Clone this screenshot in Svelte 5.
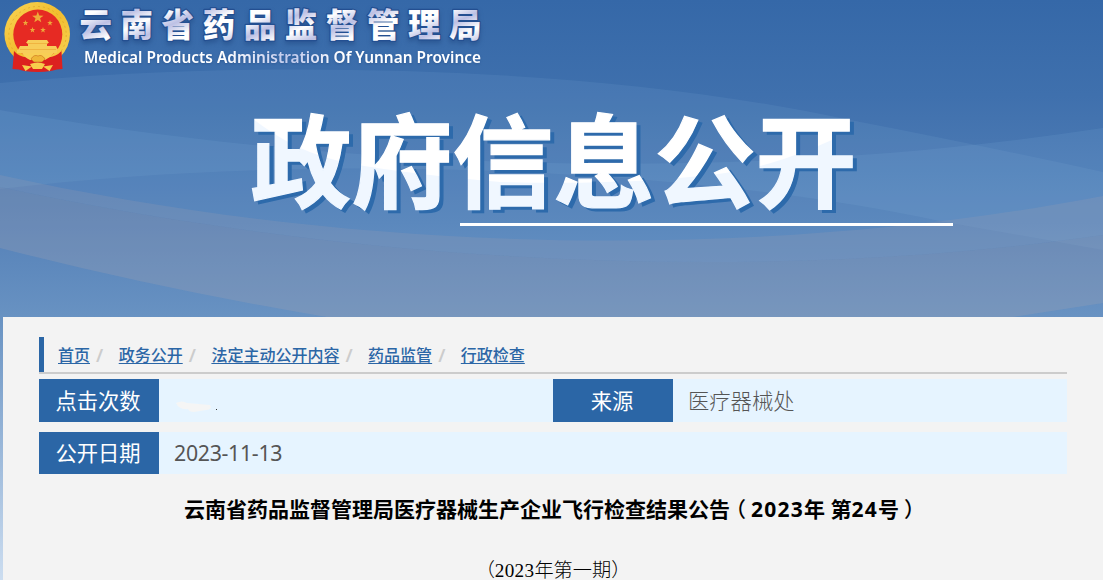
<script>
  const crumbs = ['首页', '政务公开', '法定主动公开内容', '药品监管', '行政检查'];
  const star = '0,-1 .235,-.324 .951,-.309 .38,.124 .588,.809 0,.4 -.588,.809 -.38,.124 -.951,-.309 -.235,-.324';
  const stars = [
    [37.8, 17.5, 6],
    [25.5, 23, 3],
    [50, 23, 3],
    [32.5, 30, 3],
    [43, 30, 3]
  ];
</script>

<div class="page">
  <header>
    <svg class="banner" width="1103" height="317" viewBox="0 0 1103 317">
      <defs>
        <linearGradient id="sky" x1="0" y1="0" x2="0" y2="1">
          <stop offset="0" stop-color="#3568a8" />
          <stop offset=".3" stop-color="#3f70ad" />
          <stop offset=".7" stop-color="#5581b8" />
          <stop offset="1" stop-color="#6892c2" />
        </linearGradient>
        <linearGradient id="gold" x1="0" y1="0" x2="1" y2="1">
          <stop offset="0" stop-color="#f9d456" />
          <stop offset=".5" stop-color="#f2bd2e" />
          <stop offset="1" stop-color="#f8d357" />
        </linearGradient>
        <linearGradient id="name" gradientUnits="userSpaceOnUse" x1="0" y1="8" x2="14" y2="40" spreadMethod="reflect">
          <stop offset="0" stop-color="#fff" />
          <stop offset=".4" stop-color="#bcc0e4" />
          <stop offset=".8" stop-color="#fff" />
        </linearGradient>
        <linearGradient id="latin" gradientUnits="userSpaceOnUse" x1="84" y1="0" x2="481" y2="0">
          <stop offset=".35" stop-color="#fff" />
          <stop offset=".52" stop-color="#bfc9ec" />
          <stop offset=".65" stop-color="#fff" />
        </linearGradient>
        <pattern id="gloss" patternUnits="userSpaceOnUse" width="1103" height="317">
          <rect width="1103" height="317" fill="#fff" />
          <path d="M240 108Q285 148 335 160T500 182Q640 186 740 171Q800 158 860 126V240H240Z" fill="#f0f7ff" />
        </pattern>
      </defs>
      <rect width="1103" height="317" fill="url(#sky)" />
      <g fill="#8ec0e8">
        <path opacity=".11" d="M0 83C260 58 600 66 845 119Q980 145 1103 172V250L940 221C700 170 330 150 0 189Z" />
        <path opacity=".12" d="M0 110C300 163 700 190 1103 128V235C750 286 350 262 0 187Z" />
      </g>
      <g fill="#a3a1b0">
        <path opacity=".2" d="M0 175C330 248 730 267 1103 196V235C750 286 350 262 0 187Z" />
        <path opacity=".27" d="M0 187C350 262 750 286 1103 235V303L1013 317H327Q160 289 0 248Z" />
      </g>

      <ellipse cx="37.2" cy="34" rx="32.800" ry="32" fill="url(#gold)" />
      <ellipse cx="37.500" cy="35" rx="28.700" ry="28.500" fill="none" stroke="#dda526" stroke-width=".7" stroke-dasharray="2 3" />
      <ellipse cx="37.800" cy="34.500" rx="24.500" ry="25" fill="#e62a23" />
      {#each stars as [x, y, r]}
        <polygon points={star} fill="#eea93a" transform="translate({x} {y}) scale({r})" />
      {/each}
      <path d="M28 40H47L49 43H47V46H56L58 50H57V53H17V50H18L20 46H28V43H26Z" fill="#f7cd59" />
      <path d="M27 43.500H48M20 49.500H56" stroke="#eead3a" stroke-width=".8" />
      <path d="M14 51Q20 58 29 57Q37 52 46 57Q55 58 61.500 51L62.500 69Q57 69 51 71Q38 73 24 71Q19 69 12.500 69Z" fill="#dc211f" />
      <path d="M22 53H54Q50 58 45 60H30Q25 58 22 53Z" fill="#f8cf55" />
      <path d="M31 59Q34 54 38 56Q42 54 45 59L42 62H34Z" fill="#efb737" stroke="#c86e1b" stroke-width=".6" />
      <path d="M22 65L32 66.500 25.500 71ZM53 65L43 66.500 49.500 71ZM30 64Q38 61 45 64L42 69H33Z" fill="#f7cd4c" />

      <text class="org edge" x="79.500" y="36.500" textLength="402">云南省药品监督管理局</text>
      <text class="org" x="79.500" y="36.500" textLength="402" fill="url(#name)">云南省药品监督管理局</text>
      <text class="latin" x="84" y="63" textLength="397" lengthAdjust="spacingAndGlyphs" fill="url(#latin)">Medical Products Administration Of Yunnan Province</text>
      <g class="hero">
        <text x="250.500" y="199.500" textLength="606" fill="url(#gloss)" stroke="url(#gloss)" stroke-width="1.300">政府信息公开</text>
      </g>
      <rect x="460" y="223" width="493" height="3" fill="#fff" />
    </svg>
  </header>

  <main>
    <nav>
      {#each crumbs as crumb, i}
        <span class="crumb"><a href="#top">{crumb}</a>{#if i < crumbs.length - 1}<i>/</i>{/if}</span>
      {/each}
    </nav>
    <div class="info">
      <div class="label">点击次数</div>
      <div class="value hits">
        <svg width="46" height="12" viewBox="0 0 46 12"><path d="M2 2Q8-1 13 2L36 4Q39 8 32 9L20 11Q15 11 14 8Q5 9 2 2Z" fill="#f5f5f5" /><rect x="42" y="8" width="1" height="1" fill="#333" /></svg>
      </div>
      <div class="label">来源</div>
      <div class="value source">医疗器械处</div>
      <div class="label second">公开日期</div>
      <div class="value second wide">2023-11-13</div>
    </div>
    <h1>云南省药品监督管理局医疗器械生产企业飞行检查结果公告<span class="open">（</span><span class="num">2023</span>年 第<span class="num">24</span>号<span class="close">）</span></h1>
    <p>（<span>2023</span>年第一期）</p>
  </main>
</div>

<style>
  :global(body) {
    margin: 0;
    overflow: hidden;
  }
  .page {
    width: 1103px;
    height: 580px;
    overflow: hidden;
    font-family: "Noto Sans", "Noto Sans CJK SC", sans-serif;
    background: linear-gradient(#6892c2 317px, #ccddf0 580px);
  }
  header {
    height: 317px;
  }
  .banner {
    display: block;
  }
  .org {
    font: 900 32.5px "Noto Sans CJK SC", sans-serif;
  }
  .edge {
    fill: #244f91;
    stroke: #244f91;
    stroke-width: 2.5px;
    stroke-linejoin: round;
    filter: drop-shadow(0 3px 2px rgb(31 72 130 / 0.5));
  }
  .latin {
    font: 600 16px "Noto Sans", sans-serif;
    filter: drop-shadow(0 1px 1px rgb(31 72 130 / 0.5));
  }
  .hero {
    font: 700 101px "Noto Sans CJK SC", sans-serif;
    filter: drop-shadow(4px 3px 0 #2d6aab);
  }
  main {
    box-sizing: border-box;
    height: 263px;
    margin-left: 3px;
    padding: 20px 36px 0;
    background: #f3f3f3;
  }
  nav {
    display: flex;
    gap: 28.7px;
    box-sizing: border-box;
    width: 1028px;
    height: 35px;
    padding-left: 14px;
    border-left: 5px solid #2b66a6;
    line-height: 36px;
    font-size: 16px;
    font-weight: 500;
  }
  .crumb {
    position: relative;
    white-space: nowrap;
  }
  a {
    color: #2b66a6;
    text-decoration: underline;
    text-decoration-thickness: 1px;
    text-underline-offset: 2px;
  }
  i {
    position: absolute;
    left: calc(100% + 6px);
    color: #ccc;
    font-size: 18px;
    font-weight: 600;
    font-style: normal;
  }
  .info {
    display: grid;
    grid-template-columns: 120px 394px 120px 394px;
    grid-template-rows: 43px 42px;
    row-gap: 10px;
    width: 1028px;
    padding-top: 5px;
    border-top: 2px solid #ccc;
    font-size: 21.3px;
    line-height: 43px;
  }
  .label {
    padding-right: 2px;
    color: #fff;
    background: #2b66a6;
    text-align: center;
  }
  .value {
    padding-left: 15px;
    color: #555;
    background: #e6f4ff;
  }
  .hits {
    display: flex;
    align-items: flex-start;
  }
  .hits svg {
    margin-top: 22px;
  }
  .source {
    font-weight: 300;
  }
  .second {
    line-height: 41px;
  }
  .wide {
    grid-column: 2 / 5;
    letter-spacing: -0.3px;
  }
  h1 {
    width: 1026px;
    margin: 20px 0 0;
    color: #000;
    font-size: 21px;
    font-weight: 700;
    line-height: 30px;
    text-align: center;
    white-space: nowrap;
  }
  .num {
    letter-spacing: 1.2px;
  }
  .open,
  .close {
    font-weight: 500;
    font-feature-settings: "halt";
  }
  .open {
    margin: 0 5px 0 5.5px;
  }
  .close {
    margin: 0 5.5px 0 5px;
  }
  p {
    width: 1028px;
    margin: 32px 0 0;
    color: #000;
    font: 300 19.2px/30px "Liberation Serif", "Noto Sans CJK SC", serif;
    text-align: center;
  }
  p span {
    letter-spacing: 0.3px;
  }
</style>
